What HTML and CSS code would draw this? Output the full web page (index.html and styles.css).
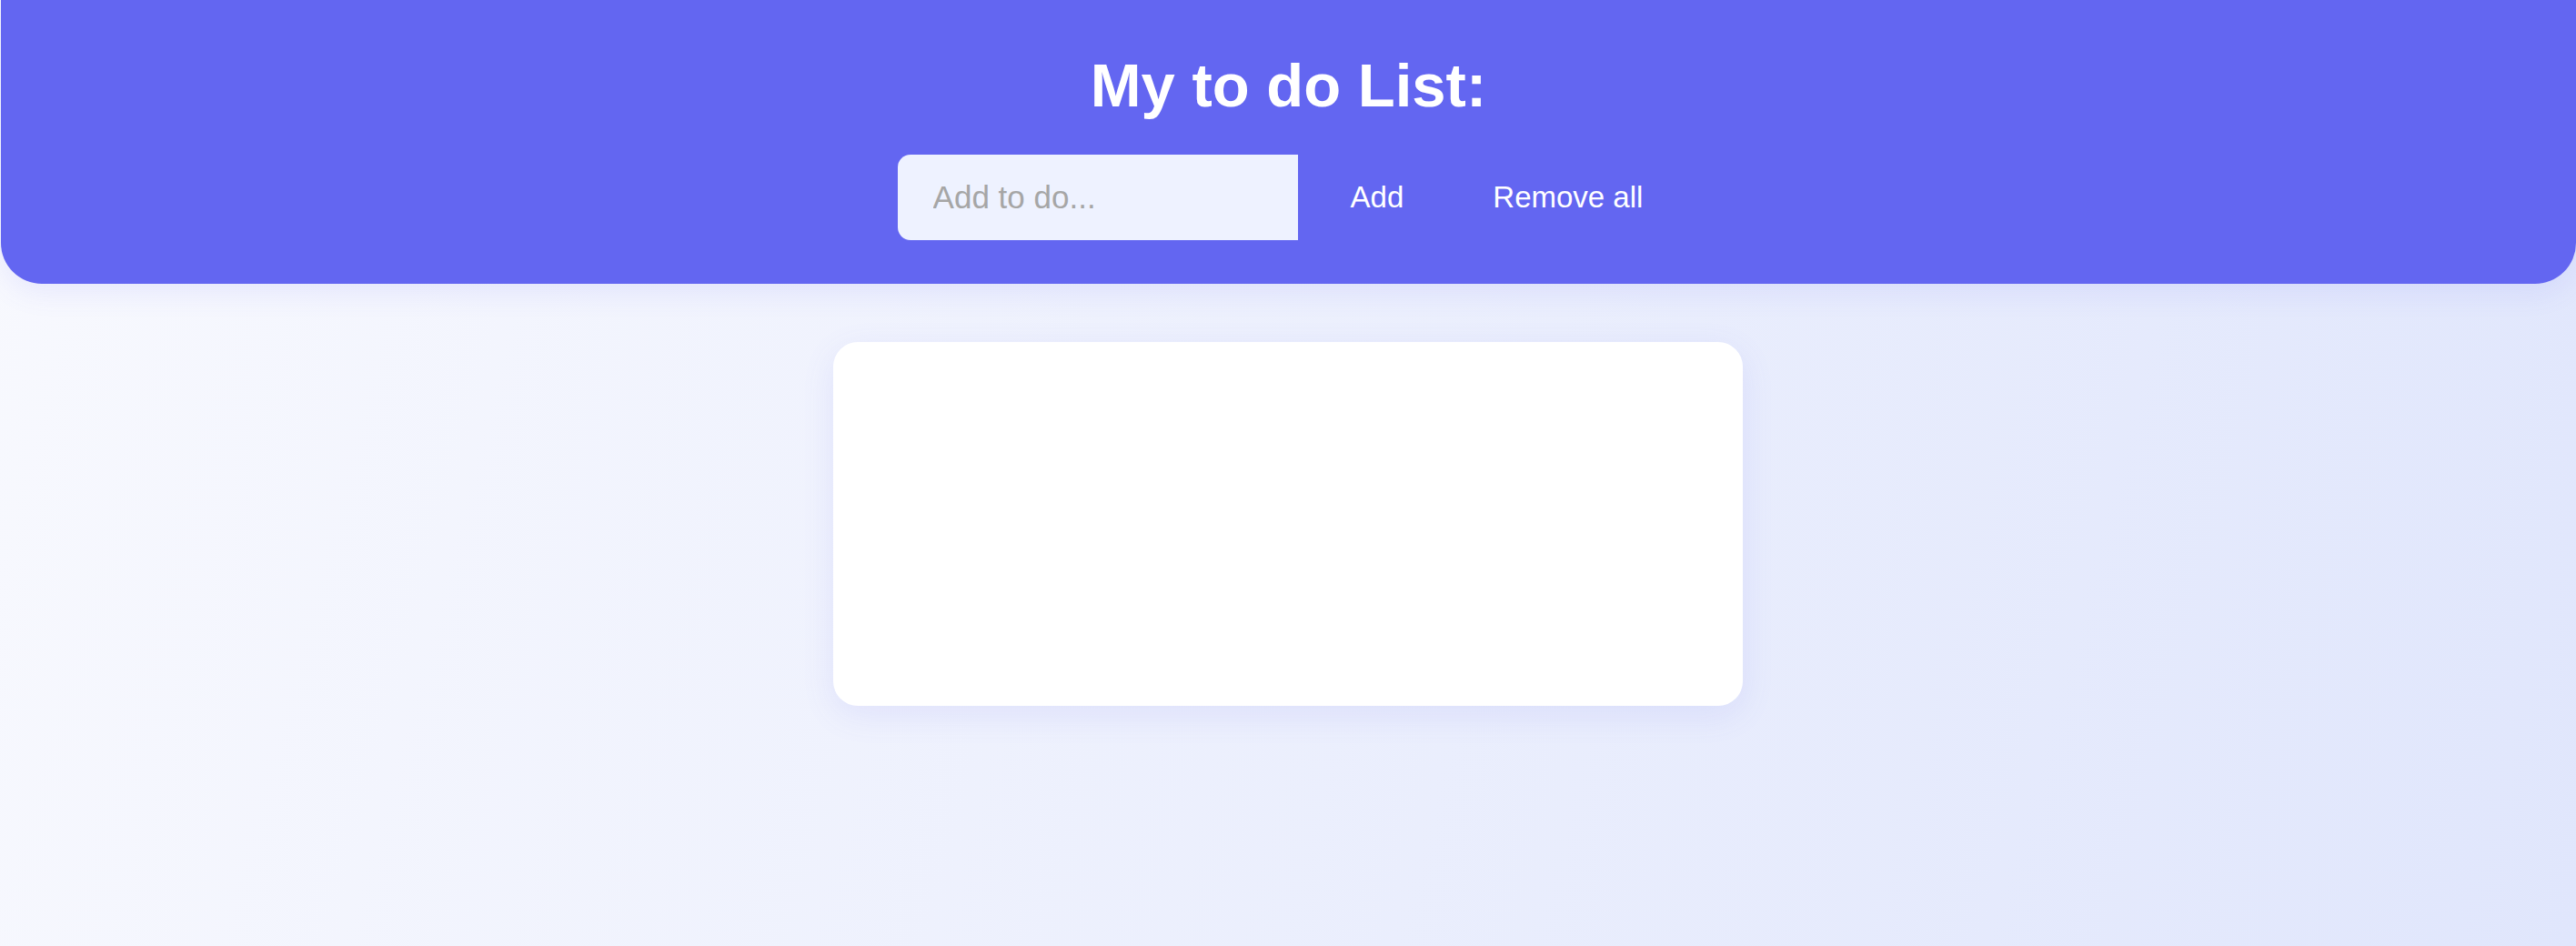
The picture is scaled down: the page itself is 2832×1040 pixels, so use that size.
FILE: index.html
```html
<!DOCTYPE html>
<html lang="en">
<head>
<meta charset="utf-8">
<title>My to do List</title>
<link rel="stylesheet" href="styles.css">
</head>
<body>
  <header class="header">
    <h1 class="title">My to do List:</h1>
    <div class="controls">
      <input class="todo-input" type="text" placeholder="Add to do...">
      <button class="btn">Add</button>
      <button class="btn">Remove all</button>
    </div>
  </header>
  <main class="main">
    <ul class="list"></ul>
  </main>
</body>
</html>
```

FILE: styles.css
```css
* { box-sizing: border-box; }

html, body {
  margin: 0;
  padding: 0;
}

body {
  min-height: 100vh;
  background: linear-gradient(105deg, #f8f9fe 0%, #e0e6fc 100%);
  font-family: "Liberation Sans", Arial, sans-serif;
}

.header {
  background: #6366f1;
  border-radius: 0 0 45px 45px;
  padding: 56px 0 48px;
  margin-left: 1px;
  display: flex;
  flex-direction: column;
  align-items: center;
  box-shadow: 0 10px 30px rgba(99, 102, 241, 0.10);
}

.title {
  margin: 0 0 38px;
  color: #ffffff;
  font-size: 67px;
  line-height: 76px;
  font-weight: bold;
}

.controls {
  display: flex;
  align-items: stretch;
  gap: 18px;
  height: 94px;
}

.todo-input {
  width: 440px;
  height: 94px;
  border: none;
  outline: none;
  border-radius: 14px 0 0 14px;
  background: #eef2ff;
  padding: 0 0 0 39px;
  font-family: "Liberation Sans", Arial, sans-serif;
  font-size: 35px;
  color: #333;
}

.todo-input::placeholder {
  color: #a6a6a6;
}

.btn {
  background: transparent;
  border: none;
  color: #ffffff;
  font-family: "Liberation Sans", Arial, sans-serif;
  font-size: 33px;
  padding: 0 40px;
  height: 94px;
  cursor: pointer;
}

.main {
  display: flex;
  justify-content: center;
  padding-top: 64px;
}

.list {
  width: 1000px;
  height: 400px;
  margin: 0;
  padding: 0;
  list-style: none;
  background: #ffffff;
  border-radius: 27px;
  box-shadow: 0 10px 36px rgba(99, 102, 241, 0.11);
}
```
